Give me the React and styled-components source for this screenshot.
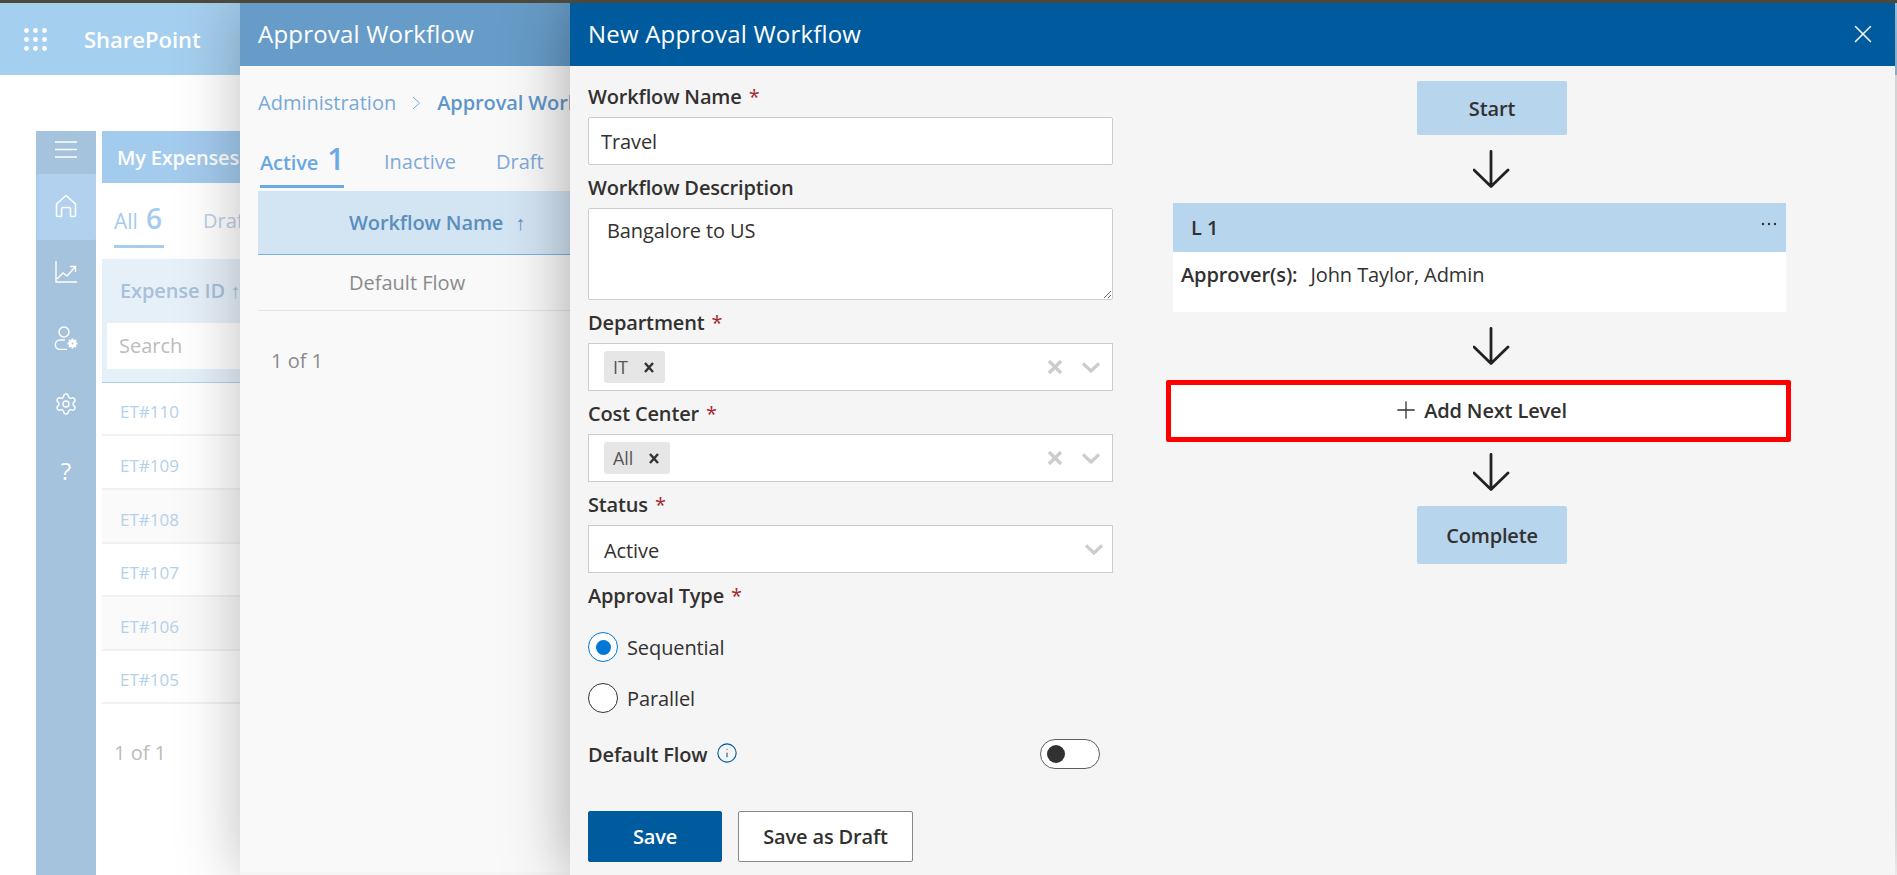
import React from "react";
import styled, { createGlobalStyle } from "styled-components";
import { Info, Settings, X, Plus } from "lucide-react";

const FONT = `"Open Sans", "Noto Sans", "Liberation Sans", sans-serif`;

const Global = createGlobalStyle`
  html, body { margin: 0; padding: 0; background: #fff; }
  body { font-family: ${FONT}; overflow: hidden; }
  * { box-sizing: border-box; }
`;

const Page = styled.div`
  position: relative;
  width: 1897px;
  height: 875px;
  overflow: hidden;
  background: #fff;
  border-top: 3px solid #4b4a3a;
`;

/* ---------- base SharePoint layer ---------- */
const TopBar = styled.header`
  height: 72px;
  background: #a5cfef;
  display: flex;
  align-items: center;
  padding-left: 24px;
  gap: 37px;
`;
const Brand = styled.span`
  color: #fff;
  font-size: 22px;
  font-weight: 600;
`;
const Workspace = styled.div`
  display: flex;
  margin: 56px 0 0 36px;
  gap: 6px;
  height: 744px;
`;
const Rail = styled.nav`
  width: 60px;
  background: #a5c3dd;
  display: flex;
  flex-direction: column;
  align-items: center;
  color: #fff;
`;
const RailMenu = styled.div`
  height: 43px;
  width: 100%;
  display: flex;
  align-items: center;
  justify-content: center;
  padding-bottom: 6px;
`;
const RailItem = styled.div`
  width: 100%;
  height: 66px;
  display: flex;
  align-items: center;
  justify-content: center;
  padding: 0 ${(p) => (p.$active ? "3px" : "0")} 2px 0;
  background: ${(p) => (p.$active ? "#b1d1ee" : "transparent")};
  border-left: ${(p) => (p.$active ? "3px solid #a9cdee" : "0")};
  border-radius: 2px;
`;
const Help = styled.span`
  font-size: 24px;
  font-weight: 400;
`;
const ListArea = styled.section`
  width: 138px;
  overflow: hidden;
`;
const ListTitle = styled.div`
  height: 52px;
  background: #a3cbee;
  color: #fff;
  font-size: 20px;
  font-weight: 600;
  letter-spacing: -0.2px;
  display: flex;
  align-items: center;
  padding-left: 15px;
  white-space: nowrap;
`;
const ListTabs = styled.div`
  height: 76px;
  display: flex;
  padding: 0 0 0 12px;
  gap: 39px;
  align-items: flex-start;
`;
const ListTab = styled.div`
  height: 65px;
  padding-top: 24px;
  flex: none;
  width: ${(p) => (p.$active ? "50px" : "auto")};
  border-bottom: ${(p) => (p.$active ? "3px solid #a6cdee" : "0")};
  color: ${(p) => (p.$active ? "#a6cbee" : "#bcd0e6")};
  font-size: ${(p) => (p.$active ? "21px" : "20px")};
  line-height: 28px;
  white-space: nowrap;
`;
const ListCount = styled.b`
  font-size: 28px;
  font-weight: 600;
  margin-left: 8px;
  line-height: 20px;
`;
const ListHead = styled.div`
  height: 124px;
  background: #e6f0f9;
  border-bottom: 1px solid #aed0ef;
  padding: 19px 0 0 5px;
`;
const ListHeadLabel = styled.div`
  color: #a9c1d9;
  font-size: 20px;
  font-weight: 600;
  letter-spacing: -0.1px;
  line-height: 26px;
  padding-left: 13px;
  white-space: nowrap;
`;
const SearchBox = styled.div`
  margin-top: 19px;
  height: 46px;
  background: #fff;
  color: #bcbcbc;
  font-size: 20px;
  line-height: 46px;
  padding-left: 12px;
`;
const ExpenseRow = styled.div`
  height: ${(p) => p.$h}px;
  border-bottom: 2px solid #f1f1f1;
  background: ${(p) => (p.$alt ? "#fafafa" : "#fff")};
  color: #b3d1ea;
  font-size: 17px;
  display: flex;
  align-items: center;
  padding: 6px 0 0 18px;
`;
const ListPager = styled.div`
  padding: 36px 0 0 12px;
  color: #bbbbbb;
  font-size: 20px;
  line-height: 26px;
`;

/* ---------- overlay panels ---------- */
const MiddlePanel = styled.aside`
  position: absolute;
  top: 0;
  left: 240px;
  width: 330px;
  height: 872px;
  background: #f9f9f9;
  box-shadow: 0 0 60px rgba(0, 0, 0, 0.26);
  border-bottom: 3px solid #f5f5f5;
`;
const MiddleHead = styled.div`
  height: 63px;
  background: #679cc8;
  color: #fff;
  font-size: 24px;
  letter-spacing: 0.2px;
  display: flex;
  align-items: center;
  padding: 0 0 2px 18px;
`;
const MiddleBody = styled.div`
  padding: 0 0 0 18px;
`;
const Crumbs = styled.div`
  height: 77px;
  display: flex;
  align-items: center;
  gap: 16px;
  padding-bottom: 4px;
  font-size: 20px;
  color: #78a9d8;
  white-space: nowrap;
`;
const CrumbCurrent = styled.span`
  color: #5f96c8;
  font-weight: 600;
  letter-spacing: -0.1px;
  flex: 1;
  min-width: 0;
  overflow: hidden;
`;
const MiddleTabs = styled.div`
  height: 48px;
  display: flex;
  align-items: flex-start;
  gap: 40px;
  padding-left: 2px;
`;
const MiddleTab = styled.div`
  height: ${(p) => (p.$active ? "45px" : "auto")};
  width: ${(p) => (p.$active ? "84px" : "auto")};
  border-bottom: ${(p) => (p.$active ? "3px solid #6aaae6" : "0")};
  color: ${(p) => (p.$active ? "#68a7e2" : "#80a9d9")};
  font-weight: ${(p) => (p.$active ? 600 : 400)};
  font-size: 20px;
  letter-spacing: ${(p) => (p.$active ? "-0.1px" : "0")};
  line-height: 26px;
  padding-top: 6px;
  white-space: nowrap;
`;
const TabCount = styled.span`
  font-size: 30px;
  font-weight: 600;
  margin-left: 9px;
  line-height: 20px;
  color: #6aaae6;
`;
const MiddleHeadRow = styled.div`
  height: 64px;
  background: #d3e4f3;
  border-bottom: 1px solid #7db1e3;
  display: flex;
  align-items: center;
  gap: 12px;
  padding-left: 91px;
  color: #5a8fbd;
  font-size: 20px;
  font-weight: 600;
  letter-spacing: -0.1px;
`;
const SortArrow = styled.span`
  font-weight: 300;
`;
const MiddleRow = styled.div`
  height: 56px;
  border-bottom: 1px solid #e5e5e5;
  display: flex;
  align-items: center;
  padding-left: 91px;
  color: #8b8b8b;
  font-size: 20px;
`;
const MiddlePager = styled.div`
  padding: 37px 0 0 13px;
  color: #8b8b8b;
  font-size: 20px;
  line-height: 26px;
`;

const FrontPanel = styled.main`
  position: absolute;
  top: 0;
  left: 570px;
  right: 2px;
  bottom: 0;
  background: #f5f5f5;
  box-shadow: 0 0 60px rgba(0, 0, 0, 0.34);
  display: flex;
  flex-direction: column;
`;
const FrontHead = styled.div`
  height: 63px;
  flex: none;
  background: #005a9e;
  color: #fff;
  font-size: 24px;
  letter-spacing: 0.2px;
  display: flex;
  align-items: center;
  justify-content: space-between;
  padding: 0 17px 2px 18px;
`;
const FrontBody = styled.div`
  display: flex;
  align-items: flex-start;
`;

/* ---------- form ---------- */
const Form = styled.form`
  width: 525px;
  margin: 18px 0 0 18px;
  flex: none;
`;
const Label = styled.div`
  height: 24px;
  line-height: 26px;
  margin: ${(p) => (p.$first ? "0" : "10px")} 0 9px;
  font-size: 20px;
  font-weight: 600;
  letter-spacing: -0.15px;
  color: #323130;
  white-space: nowrap;
`;
const Req = styled.span`
  color: #a4262c;
  font-weight: 400;
  margin-left: 7px;
`;
const TextInput = styled.input`
  display: block;
  width: 100%;
  height: 48px;
  border: 1px solid #cccccc;
  border-radius: 2px;
  background: #fff;
  padding: 0 12px;
  font: 400 20px ${FONT};
  letter-spacing: -0.1px;
  color: #323130;
  outline: none;
`;
const TextArea = styled.textarea`
  display: block;
  width: 100%;
  height: 92px;
  border: 1px solid #cccccc;
  border-radius: 2px;
  background: #fff;
  padding: 9px 18px;
  font: 400 20px/26px ${FONT};
  letter-spacing: -0.1px;
  color: #323130;
  outline: none;
  resize: vertical;
`;
const Select = styled.div`
  height: 48px;
  border: 1px solid #cccccc;
  background: #fff;
  display: flex;
  align-items: center;
  padding: 0 ${(p) => p.$pr}px 0 15px;
  font-size: 20px;
  letter-spacing: -0.1px;
  color: #323130;
`;
const SelectValue = styled.span`
  padding-top: 2px;
`;
const Chip = styled.span`
  height: 32px;
  display: inline-flex;
  align-items: center;
  gap: 16px;
  padding: 0 11px 0 9px;
  background: #e6e6e6;
  border-radius: 3px;
  font-size: 18px;
  color: #555;
`;
const SelectIcons = styled.span`
  margin-left: auto;
  display: flex;
  align-items: center;
  gap: 20px;
`;
const RadioRow = styled.label`
  display: flex;
  align-items: center;
  gap: 9px;
  height: 30px;
  margin-top: ${(p) => p.$top}px;
  font-size: 20px;
  letter-spacing: -0.1px;
  color: #323130;
`;
const RadioMark = styled.span`
  width: 30px;
  height: 30px;
  border-radius: 50%;
  background: #fff;
  border: 1px solid ${(p) => (p.$on ? "#0078d4" : "#333")};
  display: flex;
  align-items: center;
  justify-content: center;
  &::after {
    content: "";
    width: 15px;
    height: 15px;
    border-radius: 50%;
    background: ${(p) => (p.$on ? "#0078d4" : "transparent")};
  }
`;
const DefaultRow = styled.div`
  display: flex;
  align-items: center;
  height: 30px;
  margin-top: 26px;
  padding-right: 13px;
  font-size: 20px;
  font-weight: 600;
  letter-spacing: -0.15px;
  color: #323130;
`;
const InfoMark = styled.span`
  display: flex;
  margin: 0 0 2px 9px;
  color: #005a9e;
`;
const Toggle = styled.span`
  margin-left: auto;
  width: 60px;
  height: 30px;
  border: 1px solid #605e5c;
  border-radius: 15px;
  background: #fff;
  display: flex;
  align-items: center;
  padding-left: 6px;
  &::after {
    content: "";
    width: 18px;
    height: 18px;
    border-radius: 50%;
    background: #323130;
  }
`;
const Actions = styled.div`
  display: flex;
  gap: 16px;
  margin-top: 42px;
`;
const Button = styled.button`
  height: 51px;
  width: ${(p) => (p.$primary ? "134px" : "175px")};
  background: ${(p) => (p.$primary ? "#005a9e" : "#fff")};
  color: ${(p) => (p.$primary ? "#fff" : "#323130")};
  border: 1px solid ${(p) => (p.$primary ? "#005a9e" : "#8a8886")};
  border-radius: 2px;
  font: 600 20px ${FONT};
  letter-spacing: -0.15px;
  padding: 0;
`;

/* ---------- flow ---------- */
const Flow = styled.div`
  width: 625px;
  margin: 15px 0 0 53px;
  flex: none;
  display: flex;
  flex-direction: column;
`;
const FlowCenter = styled.div`
  display: flex;
  justify-content: center;
  padding-left: 27px;
  margin-top: ${(p) => p.$top || 0}px;
`;
const Terminal = styled.div`
  width: 150px;
  height: ${(p) => p.$h}px;
  background: #b8d5ee;
  border-radius: 2px;
  display: flex;
  align-items: center;
  justify-content: center;
  padding-top: 1px;
  font-size: 20px;
  font-weight: 600;
  letter-spacing: -0.15px;
  color: #323130;
`;
const Card = styled.div`
  width: 613px;
  margin: 15px 0 0 7px;
  background: #fff;
`;
const CardHead = styled.div`
  height: 49px;
  background: #b8d5ee;
  display: flex;
  align-items: center;
  justify-content: space-between;
  padding: 0 9px 0 18px;
  font-size: 20px;
  font-weight: 600;
  color: #323130;
`;
const CardBody = styled.div`
  height: 60px;
  padding: 10px 0 0 8px;
  display: flex;
  gap: 13px;
  font-size: 20px;
  line-height: 26px;
  letter-spacing: -0.1px;
  color: #323130;
`;
const Strong = styled.span`
  font-weight: 600;
`;
const AddLevel = styled.div`
  height: 62px;
  margin-top: 15px;
  border: 5px solid #ff0000;
  border-radius: 2px;
  background: #fff;
  display: flex;
  align-items: center;
  justify-content: center;
  gap: 4px;
  padding: 0 0 2px 2px;
  font-size: 20px;
  font-weight: 600;
  letter-spacing: -0.15px;
  color: #323130;
`;

const Waffle = () => (
  <svg width="23" height="23" viewBox="0 0 23 23" fill="#fff">
    {[2.5, 11.5, 20.5].flatMap((y) =>
      [2.5, 11.5, 20.5].map((x) => <circle key={`${x}-${y}`} cx={x} cy={y} r="2.4" />)
    )}
  </svg>
);
const Burger = () => (
  <svg width="22" height="17" viewBox="0 0 22 17" stroke="#fff" strokeWidth="1.3">
    <path d="M0 1h22M0 8.5h22M0 16h22" />
  </svg>
);
const HomeIcon = () => (
  <svg width="22" height="24" viewBox="0 0 22 24" fill="none" stroke="#fff" strokeWidth="1.6" strokeLinejoin="round">
    <path d="M1.5 10 11 1.5 20.5 10v11a1.5 1.5 0 0 1-1.5 1.5h-3.5V15a1.5 1.5 0 0 0-1.5-1.5H8A1.5 1.5 0 0 0 6.5 15v7.5H3A1.5 1.5 0 0 1 1.5 21z" />
  </svg>
);
const ChartIcon = () => (
  <svg width="22" height="22" viewBox="0 0 22 22" fill="none" stroke="#fff" strokeWidth="1.4">
    <path d="M1 0v21h21" />
    <path d="M2 18l6-6 4 3 8-9" />
    <path d="M15 5.5h5.5V11" />
  </svg>
);
const UserGearIcon = () => (
  <svg width="24" height="24" viewBox="0 0 24 24" fill="none" stroke="#fff" strokeWidth="1.5">
    <circle cx="10" cy="6" r="5" />
    <path d="M11 14H6a4.7 4.7 0 0 0 0 9.4h7" />
    <circle cx="18.5" cy="17.5" r="3.8" fill="#fff" stroke="none" />
    <path d="M18.5 12.5v2M18.5 20.5v2M13.5 17.5h2M21.5 17.5h2M15 14l1.4 1.4M20.6 19.6 22 21M15 21l1.4-1.4M20.6 15.4 22 14" strokeWidth="2" />
    <circle cx="18.5" cy="17.5" r="1" fill="#a5c3dd" stroke="none" />
  </svg>
);
const FlowArrow = ({ top }) => (
  <FlowCenter $top={top}>
    <svg width="38" height="38" viewBox="0 0 38 38" fill="none" stroke="#222" strokeWidth="2.8" strokeLinecap="round" strokeLinejoin="round">
      <path d="M18 1.5v35M1 20l17 16.5L35 20" />
    </svg>
  </FlowCenter>
);
const ClearX = () => (
  <svg width="14" height="14" viewBox="0 0 14 14" stroke="#cccccc" strokeWidth="3.4">
    <path d="M1 1l12 12M13 1 1 13" />
  </svg>
);
const ChipX = () => (
  <svg width="10" height="11" viewBox="0 0 10 11" stroke="#333" strokeWidth="2.4">
    <path d="M1 1l8 9M9 1 1 10" />
  </svg>
);
const Caret = () => (
  <svg width="18" height="11" viewBox="0 0 18 11" fill="none" stroke="#cccccc" strokeWidth="3.2">
    <path d="M1 1.5 9 9l8-7.5" />
  </svg>
);
const MoreDots = () => (
  <svg width="16" height="14" viewBox="0 0 16 14" fill="#323130">
    <circle cx="2" cy="3" r="1.2" />
    <circle cx="8" cy="3" r="1.2" />
    <circle cx="14" cy="3" r="1.2" />
  </svg>
);

const rows = [
  ["ET#110", 53, false],
  ["ET#109", 54, false],
  ["ET#108", 54, true],
  ["ET#107", 53, false],
  ["ET#106", 54, true],
  ["ET#105", 53, false],
];

export default function App() {
  return (
    <Page>
      <Global />
      <TopBar>
        <Waffle />
        <Brand>SharePoint</Brand>
      </TopBar>
      <Workspace>
        <Rail>
          <RailMenu><Burger /></RailMenu>
          <RailItem $active><HomeIcon /></RailItem>
          <RailItem><ChartIcon /></RailItem>
          <RailItem><UserGearIcon /></RailItem>
          <RailItem><Settings size={24} strokeWidth={1.4} /></RailItem>
          <RailItem><Help>?</Help></RailItem>
        </Rail>
        <ListArea>
          <ListTitle>My Expenses</ListTitle>
          <ListTabs>
            <ListTab $active>All<ListCount>6</ListCount></ListTab>
            <ListTab>Draft</ListTab>
          </ListTabs>
          <ListHead>
            <ListHeadLabel>Expense ID ↑</ListHeadLabel>
            <SearchBox>Search</SearchBox>
          </ListHead>
          {rows.map(([id, h, alt]) => (
            <ExpenseRow key={id} $h={h} $alt={alt}>{id}</ExpenseRow>
          ))}
          <ListPager>1 of 1</ListPager>
        </ListArea>
      </Workspace>

      <MiddlePanel>
        <MiddleHead>Approval Workflow</MiddleHead>
        <MiddleBody>
          <Crumbs>
            <span>Administration</span>
            <svg width="9" height="14" viewBox="0 0 9 14" fill="none" stroke="#78a9d8" strokeWidth="1">
              <path d="M1 1l6.5 6L1 13" />
            </svg>
            <CrumbCurrent>Approval Workflow</CrumbCurrent>
          </Crumbs>
          <MiddleTabs>
            <MiddleTab $active>Active<TabCount>1</TabCount></MiddleTab>
            <MiddleTab>Inactive</MiddleTab>
            <MiddleTab>Draft</MiddleTab>
          </MiddleTabs>
          <MiddleHeadRow>
            <span>Workflow Name</span>
            <SortArrow>↑</SortArrow>
          </MiddleHeadRow>
          <MiddleRow>Default Flow</MiddleRow>
          <MiddlePager>1 of 1</MiddlePager>
        </MiddleBody>
      </MiddlePanel>

      <FrontPanel>
        <FrontHead>
          <span>New Approval Workflow</span>
          <X size={30} strokeWidth={1.2} color="#fff" />
        </FrontHead>
        <FrontBody>
          <Form>
            <Label $first>Workflow Name<Req>*</Req></Label>
            <TextInput defaultValue="Travel" />
            <Label>Workflow Description</Label>
            <TextArea defaultValue="Bangalore to US" />
            <Label>Department<Req>*</Req></Label>
            <Select $pr={12}>
              <Chip>IT<ChipX /></Chip>
              <SelectIcons><ClearX /><Caret /></SelectIcons>
            </Select>
            <Label>Cost Center<Req>*</Req></Label>
            <Select $pr={12}>
              <Chip>All<ChipX /></Chip>
              <SelectIcons><ClearX /><Caret /></SelectIcons>
            </Select>
            <Label>Status<Req>*</Req></Label>
            <Select $pr={9}>
              <SelectValue>Active</SelectValue>
              <SelectIcons><Caret /></SelectIcons>
            </Select>
            <Label>Approval Type<Req>*</Req></Label>
            <RadioRow $top={25}><RadioMark $on />Sequential</RadioRow>
            <RadioRow $top={21}><RadioMark />Parallel</RadioRow>
            <DefaultRow>
              Default Flow
              <InfoMark><Info size={22} strokeWidth={1.2} /></InfoMark>
              <Toggle />
            </DefaultRow>
            <Actions>
              <Button type="button" $primary>Save</Button>
              <Button type="button">Save as Draft</Button>
            </Actions>
          </Form>
          <Flow>
            <FlowCenter><Terminal $h={54}>Start</Terminal></FlowCenter>
            <FlowArrow top={15} />
            <Card>
              <CardHead>L 1<MoreDots /></CardHead>
              <CardBody><Strong>Approver(s):</Strong><span>John Taylor, Admin</span></CardBody>
            </Card>
            <FlowArrow top={15} />
            <AddLevel>
              <Plus size={28} strokeWidth={1.1} />
              Add Next Level
            </AddLevel>
            <FlowArrow top={11} />
            <FlowCenter $top={15}><Terminal $h={58}>Complete</Terminal></FlowCenter>
          </Flow>
        </FrontBody>
      </FrontPanel>
    </Page>
  );
}
